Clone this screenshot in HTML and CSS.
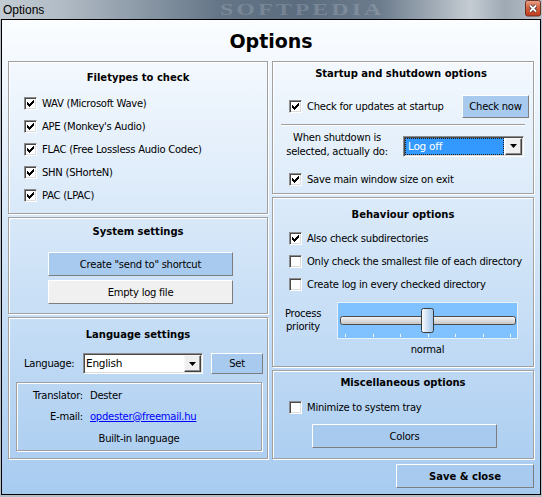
FILE: index.html
```html
<!DOCTYPE html>
<html lang="en">
<head>
    <meta charset="UTF-8">
    <title>Options</title>
    <link rel="stylesheet" href="styles.css">
</head>
<body>
    <div class="titlebar">
        <span class="title">Options</span>
        <span class="watermark">SOFTPEDIA</span>
        <span class="close">
            <svg width="16" height="17" viewBox="0 0 16 17">
                <defs>
                    <linearGradient id="closeGrad" x1="0" y1="0" x2="0" y2="1">
                        <stop offset="0" stop-color="#e9a68e"/>
                        <stop offset="0.45" stop-color="#d4623f"/>
                        <stop offset="1" stop-color="#c2391a"/>
                    </linearGradient>
                </defs>
                <rect x="0.5" y="0.5" width="15" height="15.5" rx="2" fill="url(#closeGrad)" stroke="#6a3024"/>
                <path d="M5 5.5l6 6M11 5.5l-6 6" stroke="#40302c" stroke-width="3.4"/>
                <path d="M5 5.5l6 6M11 5.5l-6 6" stroke="#fff" stroke-width="1.8"/>
            </svg>
        </span>
    </div>

    <div class="window">
        <h1 class="header">Options</h1>

        <div class="columns">
            <!-- linke Spalte -->
            <div class="column">
                <section class="panel panel-filetypes">
                    <h2>Filetypes to check</h2>
                    <label class="row"><span class="check"><svg width="9" height="9" viewBox="0 0 9 9"><path d="M1 3h1v3H1zM2 4h1v3H2zM3 5h1v3H3zM4 4h1v3H4zM5 3h1v3H5zM6 2h1v3H6zM7 1h1v3H7z"/></svg></span>WAV (Microsoft Wave)</label>
                    <label class="row"><span class="check"><svg width="9" height="9" viewBox="0 0 9 9"><path d="M1 3h1v3H1zM2 4h1v3H2zM3 5h1v3H3zM4 4h1v3H4zM5 3h1v3H5zM6 2h1v3H6zM7 1h1v3H7z"/></svg></span>APE (Monkey's Audio)</label>
                    <label class="row"><span class="check"><svg width="9" height="9" viewBox="0 0 9 9"><path d="M1 3h1v3H1zM2 4h1v3H2zM3 5h1v3H3zM4 4h1v3H4zM5 3h1v3H5zM6 2h1v3H6zM7 1h1v3H7z"/></svg></span>FLAC (Free Lossless Audio Codec)</label>
                    <label class="row"><span class="check"><svg width="9" height="9" viewBox="0 0 9 9"><path d="M1 3h1v3H1zM2 4h1v3H2zM3 5h1v3H3zM4 4h1v3H4zM5 3h1v3H5zM6 2h1v3H6zM7 1h1v3H7z"/></svg></span>SHN (SHorteN)</label>
                    <label class="row"><span class="check"><svg width="9" height="9" viewBox="0 0 9 9"><path d="M1 3h1v3H1zM2 4h1v3H2zM3 5h1v3H3zM4 4h1v3H4zM5 3h1v3H5zM6 2h1v3H6zM7 1h1v3H7z"/></svg></span>PAC (LPAC)</label>
                </section>

                <section class="panel panel-system">
                    <h2>System settings</h2>
                    <button class="btn btn-wide">Create "send to" shortcut</button>
                    <button class="btn btn-wide btn-gray">Empty log file</button>
                </section>

                <section class="panel panel-language">
                    <h2>Language settings</h2>
                    <div class="lang-row">
                        <span class="lang-label">Language:</span>
                        <div class="combo combo-lang">
                            <span class="combo-text">English</span>
                            <span class="combo-arrow"><svg width="7" height="4" viewBox="0 0 7 4"><path d="M0 0h7L3.5 4z"/></svg></span>
                        </div>
                        <button class="btn btn-set">Set</button>
                    </div>
                    <div class="translator">
                        <span class="t-label">Translator:</span><span>Dester</span>
                        <span class="t-label">E-mail:</span><a href="#">opdester@freemail.hu</a>
                        <span class="builtin">Built-in language</span>
                    </div>
                </section>
            </div>

            <!-- rechte Spalte -->
            <div class="column">
                <section class="panel panel-startup">
                    <h2>Startup and shutdown options</h2>
                    <div class="row row-right row-update">
                        <span class="check"><svg width="9" height="9" viewBox="0 0 9 9"><path d="M1 3h1v3H1zM2 4h1v3H2zM3 5h1v3H3zM4 4h1v3H4zM5 3h1v3H5zM6 2h1v3H6zM7 1h1v3H7z"/></svg></span>Check for updates at startup
                        <button class="btn btn-check">Check now</button>
                    </div>
                    <div class="separator"></div>
                    <div class="shutdown-row">
                        <span class="shutdown-label">When shutdown is<br>selected, actually do:</span>
                        <div class="combo combo-shutdown">
                            <span class="combo-text selected">Log off</span>
                            <span class="combo-arrow"><svg width="7" height="4" viewBox="0 0 7 4"><path d="M0 0h7L3.5 4z"/></svg></span>
                        </div>
                    </div>
                    <label class="row row-right row-save"><span class="check"><svg width="9" height="9" viewBox="0 0 9 9"><path d="M1 3h1v3H1zM2 4h1v3H2zM3 5h1v3H3zM4 4h1v3H4zM5 3h1v3H5zM6 2h1v3H6zM7 1h1v3H7z"/></svg></span>Save main window size on exit</label>
                </section>

                <section class="panel panel-behaviour">
                    <h2>Behaviour options</h2>
                    <label class="row row-right"><span class="check"><svg width="9" height="9" viewBox="0 0 9 9"><path d="M1 3h1v3H1zM2 4h1v3H2zM3 5h1v3H3zM4 4h1v3H4zM5 3h1v3H5zM6 2h1v3H6zM7 1h1v3H7z"/></svg></span>Also check subdirectories</label>
                    <label class="row row-right"><span class="check"></span>Only check the smallest file of each directory</label>
                    <label class="row row-right"><span class="check"></span>Create log in every checked directory</label>
                    <div class="priority-row">
                        <span class="priority-label">Process<br>priority</span>
                        <div class="track-col">
                            <svg class="trackbar" width="181" height="37" viewBox="0 0 181 37">
                                <defs>
                                    <linearGradient id="channelGrad" x1="0" y1="0" x2="0" y2="1">
                                        <stop offset="0" stop-color="#f6f6f6"/>
                                        <stop offset="1" stop-color="#c4c4c4"/>
                                    </linearGradient>
                                    <linearGradient id="thumbGrad" x1="0" y1="0" x2="1" y2="0">
                                        <stop offset="0" stop-color="#fdfeff"/>
                                        <stop offset="1" stop-color="#9fc3e8"/>
                                    </linearGradient>
                                </defs>
                                <rect x="0.5" y="0.5" width="180" height="36" fill="#80c2ff" stroke="#e6f1fc"/>
                                <rect x="3.5" y="14.5" width="175" height="8" rx="2" fill="url(#channelGrad)" stroke="#4c4c4c"/>
                                <rect x="84.5" y="6.5" width="12" height="24" rx="2" fill="url(#thumbGrad)" stroke="#3c3c3c"/>
                                <path d="M8.5 32v3M36.5 32v3M63.5 32v3M91.5 32v3M118.5 32v3M146.5 32v3M173.5 32v3" stroke="#fff"/>
                            </svg>
                            <span class="track-value">normal</span>
                        </div>
                    </div>
                </section>

                <section class="panel panel-misc">
                    <h2>Miscellaneous options</h2>
                    <label class="row row-right"><span class="check"></span>Minimize to system tray</label>
                    <button class="btn btn-wide btn-colors">Colors</button>
                </section>
            </div>
        </div>

        <div class="footer">
            <button class="btn btn-save">Save &amp; close</button>
        </div>
    </div>
</body>
</html>
```

FILE: styles.css
```css
* {
    box-sizing: border-box;
}

body {
    margin: 0;
    width: 542px;
    height: 497px;
    overflow: hidden;
    background: #b5bfc9;
    font-family: "DejaVu Sans", Verdana, sans-serif;
    font-size: 10px;
    letter-spacing: -0.25px;
    color: #000;
}

/* Titelleiste */
.titlebar {
    position: relative;
    height: 19px;
    overflow: hidden;
    display: flex;
    align-items: center;
    background: linear-gradient(to right, #c3cbd3 0px, #b2bcc6 60px, #8795a3 150px, #647587 220px, #5b6c7f 300px, #6c7c8d 380px, #a7b1bb 440px, #c5ccd3 470px, #9ea9b4 505px, #b8c0c8 542px);
}

.title {
    margin-left: 3px;
    font-family: "Liberation Sans", Arial, sans-serif;
    font-size: 12px;
    letter-spacing: 0;
}

.watermark {
    position: absolute;
    left: 220px;
    top: 0;
    line-height: 19px;
    font-family: "Liberation Serif", serif;
    font-weight: bold;
    font-size: 16px;
    letter-spacing: 2px;
    color: rgba(255, 255, 255, 0.16);
    transform: scaleX(1.5);
    transform-origin: left center;
}

.close {
    position: absolute;
    right: 1px;
    top: 0;
    display: block;
    height: 17px;
}

.close svg {
    display: block;
}

/* Fenster */
.window {
    margin: 0 1px;
    height: 476px;
    border: 1px solid #000;
    background: linear-gradient(#fbfdff, #a7cbf0);
}

.header {
    margin: 0;
    height: 41px;
    display: flex;
    align-items: center;
    justify-content: center;
    font-size: 19px;
    font-weight: bold;
    letter-spacing: 0;
}

.columns {
    display: grid;
    grid-template-columns: 260px 262px;
    gap: 4px;
    padding: 0 6px;
}

.column {
    display: flex;
    flex-direction: column;
    gap: 3px;
}

.panel {
    border: 1px solid #a0a0a0;
    box-shadow: 1px 1px 0 #fff, inset 1px 1px 0 #fff;
}

.panel h2 {
    margin: 0;
    font-size: 10px;
    font-weight: bold;
    letter-spacing: 0;
    line-height: 14px;
    text-align: center;
}

.panel-filetypes { height: 153px; padding-top: 9px; }
.panel-filetypes h2 { margin-bottom: 7px; }
.panel-system { height: 97px; padding-top: 7px; }
.panel-language { height: 142px; padding-top: 10px; }
.panel-startup { height: 133px; padding-top: 5px; padding-right: 4px; }
.panel-behaviour { height: 170px; padding-top: 10px; }
.panel-behaviour h2 { margin-bottom: 5px; }
.panel-misc { height: 89px; padding-top: 5px; }
.panel-misc h2 { margin-bottom: 6px; }

.row {
    display: flex;
    align-items: center;
    height: 23px;
    padding-left: 15px;
}

.row-right {
    padding-left: 16px;
}

/* Checkbox im klassischen 3D-Stil */
.check {
    flex: none;
    width: 13px;
    height: 13px;
    margin-right: 5px;
    background: #fff;
    border: 1px solid;
    border-color: #8c8c8c #fff #fff #8c8c8c;
    box-shadow: inset 1px 1px 0 #4a4a4a, inset -1px -1px 0 #dcdcdc;
}

.check svg {
    display: block;
    margin: 1px;
}

/* Buttons */
.btn {
    display: block;
    padding: 0;
    font: inherit;
    letter-spacing: -0.25px;
    color: #000;
    background: #a8caef;
    border: 1px solid;
    border-color: #fff #7d7d7d #7d7d7d #fff;
}

.btn-wide {
    width: 185px;
    height: 24px;
    margin-left: 39px;
}

.panel-system .btn-wide:first-of-type {
    margin-top: 13px;
}

.btn-gray {
    margin-top: 4px;
    background: #f0f0f0;
}

.btn-set {
    width: 52px;
    height: 21px;
    margin-left: 8px;
}

.btn-check {
    width: 67px;
    height: 23px;
    margin-left: auto;
}

.btn-colors {
    margin-top: 5px;
}

.btn-save {
    width: 138px;
    height: 24px;
    margin-left: auto;
    margin-right: 6px;
    font-weight: bold;
    letter-spacing: 0;
}

/* Kombinationsfelder */
.combo {
    display: flex;
    height: 21px;
    padding: 1px;
    background: #fff;
    border: 1px solid;
    border-color: #8c8c8c #fff #fff #8c8c8c;
    box-shadow: inset 1px 1px 0 #4a4a4a, inset -1px -1px 0 #dcdcdc;
}

.combo-text {
    flex: 1;
    padding-left: 1px;
    line-height: 17px;
    font-size: 10.5px;
}

.combo-text.selected {
    margin-right: 1px;
    padding-left: 2px;
    line-height: 15px;
    color: #fff;
    background: #3399ff;
    border: 1px dotted #1a1a1a;
}

.combo-arrow {
    flex: none;
    display: flex;
    align-items: center;
    justify-content: center;
    width: 17px;
    height: 17px;
    background: #efefef;
    border: 1px solid;
    border-color: #f8f8f8 #404040 #404040 #f8f8f8;
    box-shadow: inset -1px -1px 0 #8c8c8c;
}

.combo-arrow svg {
    display: block;
}

.lang-row {
    display: flex;
    align-items: center;
    margin-top: 11px;
    padding-left: 15px;
}

.lang-label {
    width: 59px;
}

.combo-lang {
    width: 120px;
}

.translator {
    display: grid;
    grid-template-columns: 66px 1fr;
    column-gap: 7px;
    width: 246px;
    height: 69px;
    margin: 8px 0 0 7px;
    padding-top: 4px;
    line-height: 17px;
    border: 1px solid #a0a0a0;
    box-shadow: 1px 1px 0 #fff, inset 1px 1px 0 #fff;
}

.t-label {
    text-align: right;
}

.translator a {
    color: #0000ff;
}

.builtin {
    grid-column: 1 / -1;
    margin-top: 4px;
    line-height: 14px;
    text-align: center;
}

/* Start/Shutdown */
.row-update {
    margin-top: 14px;
}

.separator {
    height: 2px;
    margin: 6px 4px 0 8px;
    border-top: 1px solid #a0a0a0;
    border-bottom: 1px solid #fff;
}

.shutdown-row {
    display: flex;
    align-items: center;
    margin-top: 5px;
}

.shutdown-label {
    width: 110px;
    margin-left: 9px;
    padding-bottom: 2px;
    line-height: 14px;
    text-align: center;
}

.combo-shutdown {
    width: 121px;
    margin-left: 11px;
}

.row-save {
    margin-top: 7px;
}

/* Prozesspriorität */
.priority-row {
    display: flex;
    align-items: flex-start;
    margin-top: 6px;
}

.priority-label {
    width: 40px;
    margin-left: 10px;
    margin-top: 5px;
    line-height: 13px;
    text-align: center;
}

.track-col {
    display: flex;
    flex-direction: column;
    align-items: center;
    margin-left: 14px;
}

.trackbar {
    display: block;
}

.track-value {
    margin-top: 4px;
    line-height: 14px;
}

.footer {
    display: flex;
    margin-top: 5px;
}
```
